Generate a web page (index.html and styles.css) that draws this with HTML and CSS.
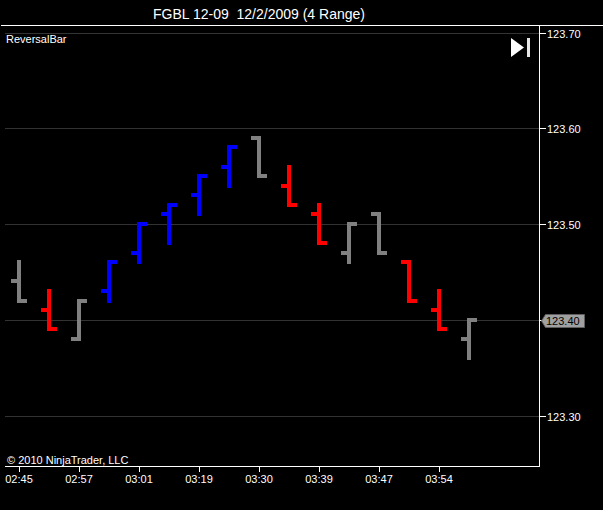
FILE: index.html
```html
<!DOCTYPE html>
<html>
<head>
<meta charset="utf-8">
<title>FGBL 12-09 ReversalBar</title>
<link rel="stylesheet" href="styles.css">
</head>
<body>
<div class="title">FGBL 12-09&nbsp; 12/2/2009 (4 Range)</div>
<div class="rule"></div>
<div class="chart">
  <div class="plot">
    <svg class="canvas" width="534" height="440" viewBox="0 0 534 440">
      <path class="grid" d="M0 7.5H534M0 102.5H534M0 198.5H534M0 294.5H534M0 390.5H534"/>
      <path class="bar gray" d="M14 234V277M6 255H14M14 275H22"/>
      <path class="bar red"  d="M44 263V305M36 284H44M44 303H52"/>
      <path class="bar gray" d="M74 273V315M66 313H74M74 275H82"/>
      <path class="bar blue" d="M104 234V277M96 265H104M104 236H112"/>
      <path class="bar blue" d="M134 196V238M126 227H134M134 198H142"/>
      <path class="bar blue" d="M164 177V219M156 188H164M164 179H172"/>
      <path class="bar blue" d="M194 148V190M186 169H194M194 150H202"/>
      <path class="bar blue" d="M224 119V162M216 141H224M224 121H232"/>
      <path class="bar gray" d="M254 110V152M246 112H254M254 150H262"/>
      <path class="bar red"  d="M284 139V181M276 160H284M284 179H292"/>
      <path class="bar red"  d="M314 177V219M306 188H314M314 217H322"/>
      <path class="bar gray" d="M344 196V238M336 227H344M344 198H352"/>
      <path class="bar gray" d="M374 186V229M366 188H374M374 227H382"/>
      <path class="bar red"  d="M404 234V277M396 236H404M404 275H412"/>
      <path class="bar red"  d="M434 263V305M426 284H434M434 303H442"/>
      <path class="bar gray" d="M464 292V334M456 313H464M464 294H472"/>
    </svg>
    <div class="plot-head">
      <span class="indicator">ReversalBar</span>
      <svg class="goto-end" width="19" height="19" viewBox="0 0 19 19">
        <polygon points="0,0 13,9.5 0,19" fill="#ffffff"/>
        <rect x="16" y="0" width="3" height="19" fill="#e6e6e6"/>
      </svg>
    </div>
    <div class="copyright">© 2010 NinjaTrader, LLC</div>
  </div>
  <div class="yaxis">
    <div class="ylabel" style="top:2px">123.70</div>
    <div class="ylabel" style="top:97px">123.60</div>
    <div class="ylabel" style="top:193px">123.50</div>
    <div class="ylabel" style="top:385px">123.30</div>
    <div class="last-tick" style="top:294px"></div>
    <div class="marker" style="top:288px">
      <svg class="marker-shape" width="44" height="14" viewBox="0 0 44 14">
        <polygon points="0.5,7 4.5,0.5 43.5,0.5 43.5,13.5 4.5,13.5" fill="#a0a0a0" stroke="#5e5e5e" stroke-width="1"/>
      </svg>
      <span class="marker-text">123.40</span>
    </div>
  </div>
</div>
<div class="xaxis">
  <div class="xtick"><span class="xlabel">02:45</span></div>
  <div class="xtick"><span class="xlabel">02:57</span></div>
  <div class="xtick"><span class="xlabel">03:01</span></div>
  <div class="xtick"><span class="xlabel">03:19</span></div>
  <div class="xtick"><span class="xlabel">03:30</span></div>
  <div class="xtick"><span class="xlabel">03:39</span></div>
  <div class="xtick"><span class="xlabel">03:47</span></div>
  <div class="xtick"><span class="xlabel">03:54</span></div>
</div>
</body>
</html>
```
FILE: styles.css
```css
html, body {
  margin: 0;
  padding: 0;
  background: #000;
}
body {
  width: 603px;
  height: 510px;
  overflow: hidden;
  color: #fff;
  font-family: "Liberation Sans", Arial, sans-serif;
  font-size: 11px;
}
.title {
  box-sizing: border-box;
  height: 25px;
  padding: 6px 85px 0 0;
  font-size: 14px;
  line-height: 16px;
  text-align: center;
  white-space: pre;
}
.rule {
  height: 1px;
  margin-left: 1px;
  background: #fff;
}
.chart {
  display: flex;
  height: 441px;
}
.plot {
  position: relative;
  margin-left: 5px;
  width: 534px;
  height: 440px;
  border-right: 1px solid #fff;
  border-bottom: 1px solid #fff;
  display: flex;
  flex-direction: column;
  justify-content: space-between;
}
.canvas {
  position: absolute;
  left: 0;
  top: 0;
  display: block;
}
.grid {
  stroke: #333;
  stroke-width: 1;
  fill: none;
}
.bar {
  fill: none;
  stroke-width: 4;
  stroke-linecap: butt;
}
.bar.gray { stroke: #808080; }
.bar.red { stroke: #ff0000; }
.bar.blue { stroke: #0000ff; }
.plot-head {
  position: relative;
  display: flex;
  justify-content: space-between;
  align-items: flex-start;
  padding: 7px 9px 0 1px;
}
.indicator {
  line-height: 12px;
}
.goto-end {
  display: block;
  margin-top: 5px;
}
.copyright {
  position: relative;
  padding-left: 2px;
  line-height: 11px;
}
.yaxis {
  position: relative;
  width: 63px;
  height: 440px;
}
.ylabel {
  position: absolute;
  left: 0;
  padding-left: 7px;
  line-height: 13px;
}
.ylabel::before {
  content: "";
  position: absolute;
  left: 0;
  top: 5px;
  width: 6px;
  height: 1px;
  background: #fff;
}
.last-tick {
  position: absolute;
  left: 0;
  width: 2px;
  height: 1px;
  background: #fff;
}
.marker {
  position: absolute;
  left: 1px;
  width: 44px;
  height: 14px;
}
.marker-shape {
  position: absolute;
  left: 0;
  top: 0;
  display: block;
}
.marker-text {
  position: relative;
  display: block;
  padding: 0.5px 0 0 5px;
  line-height: 13px;
  color: #000;
}
.xaxis {
  display: flex;
  margin-left: -11px;
}
.xtick {
  width: 60px;
  display: flex;
  flex-direction: column;
  align-items: center;
}
.xtick::before {
  content: "";
  align-self: flex-start;
  margin-left: 30px;
  width: 1px;
  height: 5px;
  background: #fff;
}
.xlabel {
  margin-top: 1px;
  line-height: 12px;
}
```
